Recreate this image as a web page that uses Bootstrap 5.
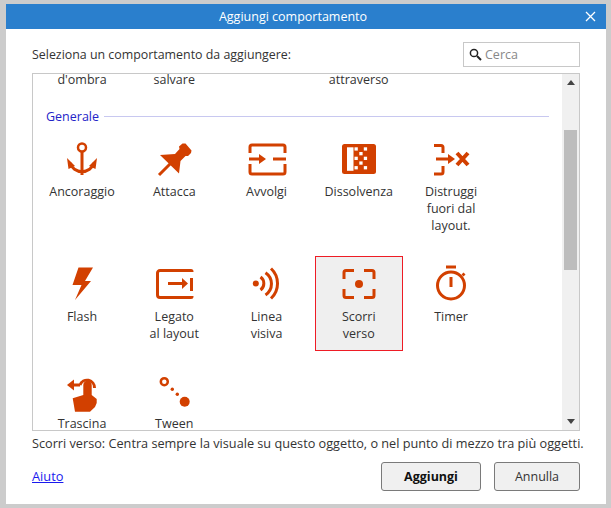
<!DOCTYPE html>
<html lang="it"><head><meta charset="utf-8"><title>Aggiungi comportamento</title>
<link rel="stylesheet" href="https://cdn.jsdelivr.net/npm/bootstrap@5.3.0/dist/css/bootstrap.min.css">
<style>
html,body{height:100%}
body{background:#ccc;font-family:"Open Sans","Noto Sans","Liberation Sans",sans-serif;font-size:12.5px;line-height:17px;color:#333;padding:4px 5px 4px 6px;overflow:hidden}
.dlg{width:600px;height:500px;background:#fff}
.dlg-title{height:25px;background:#2a7fcd;color:#fff;font-size:12.5px;padding-right:26px}
.dlg-close{right:9px;top:6px;width:13px;height:13px}
.dlg-body{padding:13px 26px 0 26px}
.lbl{font-size:12.4px}
.srch{width:117px;height:25px;border:1px solid #c8c8c8;padding-left:5px;gap:3px;color:#888}
.srch input{border:0;outline:0;width:80px;padding:0;font:inherit;color:#333}
.srch input::placeholder{color:#888;opacity:1}
.lst{height:358px;border:1px solid #c8c8c8;margin-top:6px;overflow:hidden}
.lst-main{padding-left:5px;overflow:hidden;min-width:0}
.cells{display:grid;grid-template-columns:repeat(5,88px);column-gap:4.25px;justify-items:stretch}
.toprow{height:13px;margin-top:-3px;text-align:center}
.sect{margin:24px 13px 0 8px;color:#2424c8;gap:5px}
.sect-line{height:1px;background:#c8c8f0}
.grid-top{margin-top:6px}
.cell{height:95px;padding-top:9px;text-align:center;border:1px solid transparent;margin-bottom:12px}
.cell.tall{height:112px;margin-bottom:13px}
.cell.sel{background:#efefef;border-color:#ee1c25}
.cell svg{display:block;margin:-1px auto 3px;width:40px;height:40px;overflow:visible}
.o{fill:#d24000;stroke:none}
.s{fill:none;stroke:#d24000;stroke-width:3}
.s4{stroke-width:4}
.s25{stroke-width:2.5}
.w{fill:#fff}
.sb{width:17px;background:#f0f0f0}
.sb-btn{height:17px}
.sb-gap{height:39px}
.sb-thumb{height:140px;background:#bdbdbd;margin:0 2px}
.stat{margin-top:4px;white-space:nowrap;font-size:12.7px}
.foot{margin-top:10px}
.foot a{color:#1a1aee;font-size:12.8px}
.foot .btn{height:29px;font-size:12.5px;line-height:17px;padding:0;background:#f0f0f0;border:1px solid #7a7a7a;border-radius:3px;color:#333}
.b1{width:100px;font-weight:700;color:#111!important}
.b2{width:86px;margin-left:13px}
</style></head><body>
<div class="dlg d-flex flex-column">
  <div class="dlg-title position-relative d-flex align-items-center justify-content-center">Aggiungi comportamento
    <svg class="dlg-close position-absolute" viewBox="0 0 13 13"><path d="M2 2l9 9M11 2l-9 9" stroke="#fff" stroke-width="1.3" fill="none"/></svg>
  </div>
  <div class="dlg-body flex-grow-1">
    <div class="d-flex justify-content-between align-items-center">
      <span class="lbl">Seleziona un comportamento da aggiungere:</span>
      <label class="srch d-flex align-items-center mb-0">
        <svg width="13" height="13" viewBox="0 0 13 13"><circle cx="5" cy="5" r="3.6" fill="none" stroke="#222" stroke-width="1.5"/><path d="M8 8l4 4" stroke="#222" stroke-width="2"/></svg>
        <input type="text" placeholder="Cerca">
      </label>
    </div>
    <div class="lst d-flex">
      <div class="lst-main flex-grow-1">
        <div class="cells toprow"><div>d'ombra</div><div>salvare</div><div></div><div>attraverso</div><div></div></div>
        <div class="sect d-flex align-items-center"><span>Generale</span><div class="sect-line flex-grow-1"></div></div>
        <div class="cells grid-top">
          <div class="cell tall"><svg viewBox="0 0 40 40"><circle class="s s25" cx="20" cy="7.500" r="4"/><path class="s" d="M20 12V35M8 23A12.500 12 0 0 0 32 23"/><path class="o" d="M5 18l8 8-6.500 3zM35 18l-8 8 6.500 3z"/></svg>Ancoraggio</div>
          <div class="cell tall"><svg viewBox="0 0 40 40"><path class="o" d="M6 15L21 14 25.500 9 25 6.500 28.500 3.500H31.500L37.500 10.500 37 13 34 16H31.500L26.500 21 25 33.500z"/><path class="s" d="M5 35L18 22"/></svg>Attacca</div>
          <div class="cell tall"><svg viewBox="0 0 40 40"><path class="s" d="M3 13V7a2 2 0 0 1 2-2h31a2 2 0 0 1 2 2v6M3 24v8a2 2 0 0 0 2 2h31a2 2 0 0 0 2-2v-8M2 19H13M26 19H39"/><path class="o" d="M12 14l7 5-7 5z"/></svg>Avvolgi</div>
          <div class="cell tall"><svg viewBox="0 0 40 40"><rect class="o" x="3" y="4" width="34" height="30" rx="2.500"/><g class="w"><rect x="8" y="7.300" width="6.500" height="23.500"/><rect x="15.500" y="7.300" width="3.300" height="3.300"/><rect x="24.800" y="7.300" width="3.300" height="3.300"/><rect x="20.300" y="12" width="3.300" height="3.300"/><rect x="15.500" y="16.700" width="3.300" height="3.300"/><rect x="24.800" y="16.700" width="3.300" height="3.300"/><rect x="20.300" y="21.400" width="3.300" height="3.300"/><rect x="15.500" y="26.100" width="3.300" height="3.300"/><rect x="24.800" y="26.100" width="3.300" height="3.300"/></g></svg>Dissolvenza</div>
          <div class="cell tall"><svg viewBox="0 0 40 40"><path class="s" d="M3 5.500H10a2 2 0 0 1 2 2V13M3 34H10a2 2 0 0 0 2-2V26M5 19H18"/><path class="o" d="M17 14l7 5-7 5z"/><path class="s s4" d="M26 13L37 25M37 13L26 25"/></svg>Distruggi<br>fuori dal<br>layout.</div>

          <div class="cell"><svg viewBox="0 0 40 40"><path class="o" d="M16.500 2.500H31L23 16H29L13 35 19.500 20H10.500z"/></svg>Flash</div>
          <div class="cell"><svg viewBox="0 0 40 40"><path class="s" d="M38 7V6.500a1 1 0 0 0-1-1H6a2.500 2.500 0 0 0-2.500 2.500V30a2.500 2.500 0 0 0 2.500 2.500H37a1 1 0 0 0 1-1V31"/><path class="o" d="M36 13h3v13h-3zM14 17h15v3H14z"/><path class="o" d="M28 13l6 5.500-6 5.500z"/></svg>Legato<br>al layout</div>
          <div class="cell"><svg viewBox="0 0 40 40"><circle class="o" cx="8.800" cy="18.500" r="3"/><path class="s" d="M13.500 12A8 8 0 0 1 13.500 25M18.500 7.700A13.400 13.400 0 0 1 18.500 30M24 3.500A20.500 20.500 0 0 1 24 33.500"/></svg>Linea<br>visiva</div>
          <div class="cell sel"><svg viewBox="0 0 40 40"><path class="s" d="M15 5.500H7a2 2 0 0 0-2 2V14M25 5.500H33a2 2 0 0 1 2 2V14M15 32.500H7a2 2 0 0 1-2-2V24M25 32.500H33a2 2 0 0 0 2-2V24"/><circle class="o" cx="20" cy="19" r="4"/></svg>Scorri<br>verso</div>
          <div class="cell"><svg viewBox="0 0 40 40"><circle class="s" cx="20" cy="20.500" r="13.500"/><path class="s" d="M15 2H25M20 12V22"/><path class="o" d="M30.500 9.500l2-2 2 2-2 2z"/></svg>Timer</div>

          <div class="cell"><svg viewBox="0 -3 40 40"><path class="o" d="M5 10l7-5.500v11z"/><path class="s" d="M10 10H18M18 10A7.500 7.500 0 0 1 32.500 13"/><path class="o" d="M21.300 10a4.200 4.200 0 0 1 8.400 0V20L34.700 24V28L33 32 28 36.700H13L10.700 23.300 21.300 20z"/></svg>Trascina</div>
          <div class="cell"><svg viewBox="0 -3 40 40"><circle class="s s25" cx="10.300" cy="6.700" r="3.500"/><circle class="o" cx="18.300" cy="14.300" r="1.700"/><circle class="o" cx="23.300" cy="19.300" r="1.700"/><circle class="o" cx="30.700" cy="26.700" r="5"/></svg>Tween</div>
        </div>
      </div>
      <div class="sb d-flex flex-column flex-shrink-0">
        <div class="sb-btn d-flex align-items-center justify-content-center"><svg width="8" height="5"><path d="M0 5L4 0 8 5z" fill="#444"/></svg></div>
        <div class="sb-gap"></div>
        <div class="sb-thumb"></div>
        <div class="flex-grow-1"></div>
        <div class="sb-btn d-flex align-items-center justify-content-center"><svg width="8" height="5"><path d="M0 0L4 5 8 0z" fill="#444"/></svg></div>
      </div>
    </div>
    <div class="stat">Scorri verso: Centra sempre la visuale su questo oggetto, o nel punto di mezzo tra più oggetti.</div>
    <div class="foot d-flex align-items-center">
      <a href="#">Aiuto</a>
      <button type="button" class="btn b1 ms-auto">Aggiungi</button>
      <button type="button" class="btn b2">Annulla</button>
    </div>
  </div>
</div>
<script src="https://cdn.jsdelivr.net/npm/bootstrap@5.3.0/dist/js/bootstrap.bundle.min.js"></script>
</body></html>
